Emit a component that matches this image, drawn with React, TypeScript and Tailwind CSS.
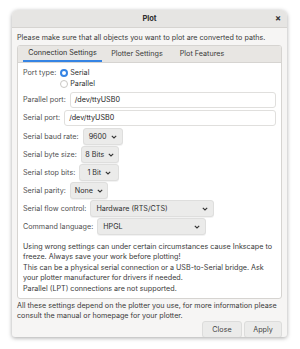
import React from "react";

const Chevron = () => (
  <svg width="6" height="4" viewBox="0 0 6 4" className="shrink-0">
    <path d="M0.8 0.8 L3 3 L5.2 0.8" fill="none" stroke="#333" strokeWidth="1.1" />
  </svg>
);

const Combo = ({ label, w, justify = "center" }: { label: string; w: string; justify?: string }) => (
  <div
    className={`h-[17px] ${w} shrink-0 whitespace-nowrap flex items-center gap-[4px] px-[5px] rounded-[3px] bg-[#ebebea] border border-[#dededd] shadow-[0_1px_0_rgba(0,0,0,0.05)] text-[#2e2e2e] ${justify === "between" ? "justify-between" : "justify-center"}`}
  >
    <span>{label}</span>
    <Chevron />
  </div>
);

const Row = ({ label, children }: { label: string; children: React.ReactNode }) => (
  <div className="flex items-center gap-[4px]">
    <span className="text-[#505050] whitespace-nowrap">{label}</span>
    {children}
  </div>
);

export default function App() {
  return (
    <div
      className="w-[300px] h-[349px] bg-white pt-[10px] pl-[12px]"
      style={{ fontFamily: "Inter, 'Noto Sans', sans-serif" }}
    >
      <div className="w-[275px] h-[327px] flex flex-col rounded-t-[6px] rounded-b-[3px] overflow-hidden bg-[#f6f5f4] shadow-[0_1px_4px_rgba(0,0,0,0.35)] text-[7.2px] leading-[10px] text-[#2e2e2e]">
        <div className="h-[18px] shrink-0 bg-[#e6e5e3] border-b border-[#d6d4d1] relative flex items-center justify-center">
          <span className="font-bold text-[7.5px] text-[#2e2e2e]">Plot</span>
          <span className="absolute right-[6px] top-[3px] text-[9px] font-bold text-[#333]">×</span>
        </div>
        <div className="px-[5px] pt-[5px] flex flex-col flex-1">
          <div className="text-[#3a3a3a] whitespace-nowrap">Please make sure that all objects you want to plot are converted to paths.</div>
          <div className="mt-[2px] border border-[#d6d4d1] rounded-[3px] overflow-hidden bg-white">
            <div className="h-[17px] bg-[#e8e6e3] border-b border-[#d6d4d1] flex items-stretch pl-[5px] text-[#3a3a3a]">
              <div className="w-[79px] flex items-center justify-center border-b-[2px] border-[#3584e4] text-[#2e2e2e]">Connection Settings</div>
              <div className="w-[70px] flex items-center justify-center">Plotter Settings</div>
              <div className="w-[60px] flex items-center justify-center">Plot Features</div>
            </div>
            <div className="px-[5px] pt-[5px] pb-[4px] flex flex-col">
              <div className="flex items-start gap-[4px]">
                <span className="text-[#505050] mt-[0px]">Port type:</span>
                <div className="flex flex-col gap-[1px]">
                  <div className="flex items-center gap-[2px]">
                    <span className="w-[8px] h-[8px] rounded-full border-[2.5px] border-[#3584e4] bg-white" />
                    <span>Serial</span>
                  </div>
                  <div className="flex items-center gap-[2px]">
                    <span className="w-[8px] h-[8px] rounded-full border border-[#c9c7c4] bg-white" />
                    <span>Parallel</span>
                  </div>
                </div>
              </div>
              <div className="flex flex-col gap-[2px] mt-[3px]">
                <Row label="Parallel port:">
                  <div className="flex-1 h-[16px] border border-[#e0dfdd] rounded-[3px] bg-white flex items-center px-[4px] text-[#222]">/dev/ttyUSB0</div>
                </Row>
                <Row label="Serial port:">
                  <div className="flex-1 h-[16px] border border-[#e0dfdd] rounded-[3px] bg-white flex items-center px-[4px] text-[#222]">/dev/ttyUSB0</div>
                </Row>
              </div>
              <div className="flex flex-col gap-[1px] mt-[2px]">
                <Row label="Serial baud rate:"><Combo label="9600" w="w-[40px]" /></Row>
                <Row label="Serial byte size:"><Combo label="8 Bits" w="w-[38px]" /></Row>
                <Row label="Serial stop bits:"><Combo label="1 Bit" w="w-[40px]" /></Row>
                <Row label="Serial parity:"><Combo label="None" w="w-[38px]" /></Row>
                <Row label="Serial flow control:"><Combo label="Hardware (RTS/CTS)" w="w-[124px]" justify="between" /></Row>
                <Row label="Command language:"><Combo label="HPGL" w="w-[109px]" justify="between" /></Row>
              </div>
              <div className="mt-[7px] text-[#3a3a3a] flex flex-col gap-[1px]">
                <div>Using wrong settings can under certain circumstances cause Inkscape to freeze. Always save your work before plotting!</div>
                <div>This can be a physical serial connection or a USB-to-Serial bridge. Ask your plotter manufacturer for drivers if needed.</div>
                <div>Parallel (LPT) connections are not supported.</div>
              </div>
            </div>
          </div>
          <div className="mt-[2px] text-[#3a3a3a]">All these settings depend on the plotter you use, for more information please consult the manual or homepage for your plotter.</div>
          <div className="mt-auto mb-[2px] flex justify-end gap-[2px]">
            <div className="w-[40px] h-[17px] rounded-[3px] bg-[#ebebea] border border-[#dcdcdb] flex items-center justify-center text-[#444]">Close</div>
            <div className="w-[38px] h-[17px] rounded-[3px] bg-[#ebebea] border border-[#dcdcdb] flex items-center justify-center text-[#444]">Apply</div>
          </div>
        </div>
      </div>
    </div>
  );
}
